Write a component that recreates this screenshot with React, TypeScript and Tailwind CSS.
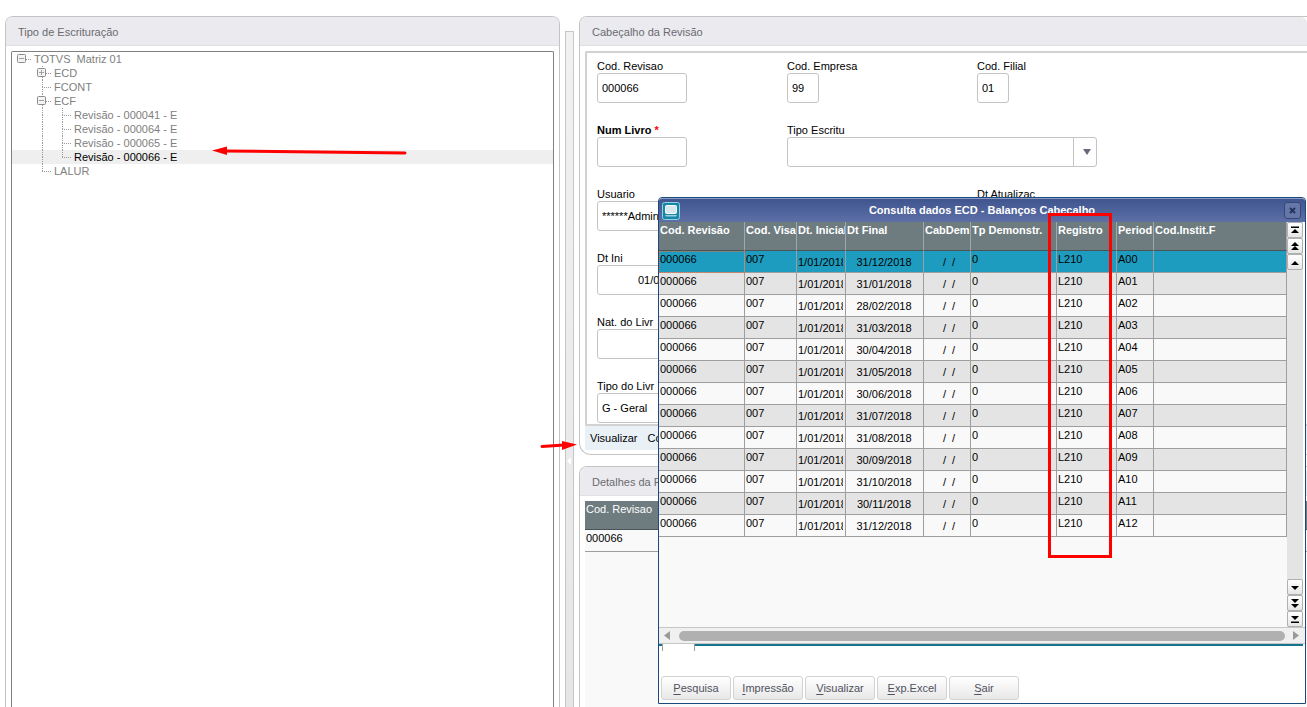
import type { ReactNode } from "react"

type Guide = "none" | "line" | "tee" | "end" | "plus" | "minus" | "root"

interface TreeNode {
  label: string
  guides: Guide[]
  selected?: boolean
}

interface Entry {
  start: string
  end: string
  period: string
}

const tree: TreeNode[] = [
  { label: "TOTVS  Matriz 01", guides: ["root"] },
  { label: "ECD", guides: ["none", "plus"] },
  { label: "FCONT", guides: ["none", "tee"] },
  { label: "ECF", guides: ["none", "minus"] },
  { label: "Revisão - 000041 - E", guides: ["none", "line", "tee"] },
  { label: "Revisão - 000064 - E", guides: ["none", "line", "tee"] },
  { label: "Revisão - 000065 - E", guides: ["none", "line", "tee"] },
  { label: "Revisão - 000066 - E", guides: ["none", "line", "end"], selected: true },
  { label: "LALUR", guides: ["none", "end"] },
]

const entries: Entry[] = [
  "31/12/2018",
  "31/01/2018",
  "28/02/2018",
  "31/03/2018",
  "30/04/2018",
  "31/05/2018",
  "30/06/2018",
  "31/07/2018",
  "31/08/2018",
  "30/09/2018",
  "31/10/2018",
  "30/11/2018",
  "31/12/2018",
].map((end, i) => ({
  start: "1/01/2018",
  end,
  period: `A${String(i).padStart(2, "0")}`,
}))

const columns = [
  { title: "Cod. Revisão", width: "w-[86px]" },
  { title: "Cod. Visa", width: "w-[52px]" },
  { title: "Dt. Inicial", width: "w-[49px]" },
  { title: "Dt Final", width: "w-[78px]" },
  { title: "CabDem", width: "w-[47px]" },
  { title: "Tp Demonstr.", width: "w-[86px]" },
  { title: "Registro", width: "w-[60px]" },
  { title: "Period", width: "w-[37px]" },
  { title: "Cod.Instit.F", width: "w-auto" },
]

const actions = ["Pesquisa", "Impressão", "Visualizar", "Exp.Excel", "Sair"]

function TreeGuide({ kind }: { kind: Guide }) {
  const box = kind === "plus" || kind === "minus" || kind === "root"
  const up = kind !== "none" && kind !== "root"
  const down = kind === "line" || kind === "tee" || kind === "plus" || kind === "minus"
  const across = kind !== "none" && kind !== "line"
  return (
    <svg width="20" height="14" viewBox="0 0 20 14" className="shrink-0" fill="none" aria-hidden="true">
      <g stroke="#9a9a9a" strokeDasharray="1 1">
        {up && <path d="M8.5 0V7" />}
        {down && <path d="M8.5 7V14" />}
        {across && <path d="M8 7.5H17" />}
      </g>
      {box && <rect x="3.5" y="2.5" width="8" height="8" rx="1" fill="#f4f4f4" stroke="#8c8c8c" />}
      {box && <path d="M5 6.5H10" stroke="#a0a0a0" />}
      {kind === "plus" && <path d="M7.5 4V9" stroke="#a0a0a0" />}
    </svg>
  )
}

function Panel({ title, className, children }: { title: string; className: string; children: ReactNode }) {
  return (
    <section className={`flex flex-col border border-[#c4c4c4] bg-white ${className}`}>
      <h2 className="h-[29px] shrink-0 rounded-t-md border-b border-[#e0e0e4] bg-[#ebeaef] px-3 pt-2 leading-[14px] text-[#6a6a70]">
        {title}
      </h2>
      {children}
    </section>
  )
}

function Field({
  id,
  label,
  value = "",
  width = "w-[90px]",
  pad = "pl-1",
  required = false,
}: {
  id: string
  label: string
  value?: string
  width?: string
  pad?: string
  required?: boolean
}) {
  return (
    <div className="h-16">
      <label htmlFor={id} className={`block leading-[14px] ${required ? "font-bold" : ""}`}>
        {label}
        {required && <span className="text-[#f00]"> *</span>}
      </label>
      <input
        id={id}
        defaultValue={value}
        className={`block h-[30px] rounded-[3px] border border-[#c4c4c4] bg-white outline-none ${width} ${pad}`}
      />
    </div>
  )
}

function SelectField({ id, label, value = "", width }: { id: string; label: string; value?: string; width: string }) {
  return (
    <div className="h-16">
      <label htmlFor={id} className="block leading-[14px]">
        {label}
      </label>
      <div className={`relative h-[30px] ${width}`}>
        <select
          id={id}
          defaultValue={value}
          className="block h-full w-full appearance-none rounded-[3px] border border-[#c4c4c4] bg-white pl-1 outline-none"
        >
          <option value={value}>{value}</option>
        </select>
        <span className="pointer-events-none absolute inset-y-px right-px flex w-[23px] items-center justify-center border-l border-[#c4c4c4] pl-1">
          <svg width="8" height="6" viewBox="0 0 8 6" aria-hidden="true">
            <path d="M0 0H8L4 6Z" fill="#666b7c" />
          </svg>
        </span>
      </div>
    </div>
  )
}

const scrollIcons = {
  first: "M4 3.5H12V5H4ZM8 6L12 10H4Z",
  pageUp: "M8 3L12 7H4ZM8 7L12 11H4Z",
  up: "M8 6L12 10H4Z",
  down: "M4 6H12L8 10Z",
  pageDown: "M4 3H12L8 7ZM4 8H12L8 12Z",
  last: "M4 4H12L8 8ZM4 9.5H12V11H4Z",
}

function ScrollButton({ icon, label }: { icon: keyof typeof scrollIcons; label: string }) {
  return (
    <button
      type="button"
      aria-label={label}
      className="flex h-4 w-4 items-center justify-center rounded-[2px] border border-[#b0b0b0] bg-linear-to-b from-white to-[#e6e6e6]"
    >
      <svg width="14" height="14" viewBox="1 0 14 14" className="shrink-0" aria-hidden="true">
        <path d={scrollIcons[icon]} fill="#000" />
      </svg>
    </button>
  )
}

function EntriesTable() {
  return (
    <table className="w-full table-fixed border-separate border-spacing-0 whitespace-nowrap">
      <colgroup>
        {columns.map((c) => (
          <col key={c.title} className={c.width} />
        ))}
      </colgroup>
      <thead>
        <tr className="h-[29px] bg-[#6e7c80] text-left text-white">
          {columns.map((c) => (
            <th
              key={c.title}
              className="overflow-hidden border-r border-b border-r-[#a2a8aa] border-b-[#4a5355] p-0 pt-px pl-px align-top leading-[14px] font-bold"
            >
              {c.title}
            </th>
          ))}
        </tr>
      </thead>
      <tbody>
        {entries.map((e, i) => {
          const bg = i === 0 ? "bg-[#1d9cbf]" : i % 2 ? "bg-[#e4e4e4]" : "bg-[#f9f9f9]"
          const cell = "overflow-hidden border-r border-b border-[#9e9e9e] p-0 pt-px pl-px align-top leading-[14px]"
          const date = "overflow-hidden border-r border-b border-[#9e9e9e] p-0 pt-1 align-top leading-[14px]"
          return (
            <tr key={e.period} className={`h-[22px] ${bg}`}>
              <td className={i === 0 ? `${cell} outline-1 -outline-offset-1 outline-dotted outline-[#e07040]` : cell}>
                000066
              </td>
              <td className={cell}>007</td>
              <td className={date}>
                <span className="mr-0.5 ml-px block overflow-hidden">{e.start}</span>
              </td>
              <td className={`${date} pr-px text-center`}>{e.end}</td>
              <td className={`${date} pl-1 text-center whitespace-pre`}>{"/  /"}</td>
              <td className={cell}>0</td>
              <td className={cell}>L210</td>
              <td className={cell}>{e.period}</td>
              <td className={cell} />
            </tr>
          )
        })}
      </tbody>
    </table>
  )
}

function QueryWindow() {
  return (
    <div
      role="dialog"
      aria-labelledby="query-title"
      className="absolute top-[197px] right-px left-[658px] flex h-[507px] flex-col rounded-t border border-[#1c4a7c] bg-white"
    >
      <header className="flex h-6 shrink-0 items-center rounded-t-[3px] border-t border-[#8d9cc4] bg-linear-to-b from-[#40548f] to-[#5d70a6] pr-1 pl-[3px] text-white">
        <svg width="18" height="18" viewBox="0 0 18 18" aria-hidden="true">
          <rect x="0.5" y="0.5" width="17" height="17" rx="2" fill="#1787a8" stroke="#8fd0e2" />
          <rect x="3.500" y="3.500" width="11" height="8" rx="1" fill="#d5e8ee" stroke="#fff" />
          <path d="M3 13H15L14 14.500H4Z" fill="#9fd0dd" />
        </svg>
        <h1 id="query-title" className="flex-1 text-center font-bold">
          Consulta dados ECD - Balanços Cabecalho
        </h1>
        <button
          type="button"
          aria-label="Fechar"
          className="flex h-[17px] w-[17px] items-center justify-center rounded-[3px] border border-[#374777] bg-[#6576a8]"
        >
          <svg width="7" height="7" viewBox="0 0 7 7" aria-hidden="true">
            <path d="M1 1L6 6M6 1L1 6" stroke="#26345e" strokeWidth="2" />
          </svg>
        </button>
      </header>
      <div className="flex min-h-0 flex-1 pr-0.5">
        <div className="min-w-0 flex-1 bg-[#f9f9f9]">
          <EntriesTable />
        </div>
        <div className="flex w-4 flex-col items-center justify-between bg-[#e4e4e4]">
          <div>
            <ScrollButton icon="first" label="Primeiro" />
            <ScrollButton icon="pageUp" label="Página acima" />
            <ScrollButton icon="up" label="Acima" />
          </div>
          <div>
            <ScrollButton icon="down" label="Abaixo" />
            <ScrollButton icon="pageDown" label="Página abaixo" />
            <ScrollButton icon="last" label="Último" />
          </div>
        </div>
      </div>
      <div className="flex h-[17px] shrink-0 items-center gap-2 border-y border-[#c6c6c6] bg-[#f0f0f0] px-[5px]">
        <svg width="7" height="9" viewBox="0 0 7 9" aria-hidden="true">
          <path d="M6 0V9L0 4.5Z" fill="#9a9a9a" />
        </svg>
        <span className="h-[10px] flex-1 rounded-full bg-[#b0b0b0]" />
        <svg width="7" height="9" viewBox="0 0 7 9" aria-hidden="true">
          <path d="M0 0V9L6 4.5Z" fill="#9a9a9a" />
        </svg>
      </div>
      <div className="flex h-8 shrink-0 pr-0.5">
        <span className="h-0.5 w-[3px] bg-[#15758d]" />
        <span className="h-[7px] w-[33px] border-x border-[#9e9e9e]" />
        <span className="h-0.5 flex-1 bg-[#15758d]" />
      </div>
      <footer className="flex shrink-0 gap-0.5 px-0.5 pb-[3px]">
        {actions.map((a) => (
          <button
            key={a}
            type="button"
            className="h-6 w-[70px] rounded-[3px] border border-[#d2d2d2] bg-linear-to-b from-white to-[#e8e8e8] text-[#50525e]"
          >
            <span className="underline underline-offset-2">{a[0]}</span>
            {a.slice(1)}
          </button>
        ))}
      </footer>
    </div>
  )
}

// Hand-drawn marks lying over the screen
function Marks() {
  return (
    <>
      <svg className="pointer-events-none absolute top-[144px] left-[211px]" width="196" height="14" viewBox="0 0 196 14" aria-hidden="true">
        <path d="M14 7L194 9" stroke="#f00" strokeWidth="3" strokeLinecap="round" />
        <path d="M1 6.5L16 2.5V11Z" fill="#f00" />
      </svg>
      <svg className="pointer-events-none absolute top-[438px] left-[540px]" width="38" height="14" viewBox="0 0 38 14" aria-hidden="true">
        <path d="M2 8.5L24 7" stroke="#f00" strokeWidth="3" strokeLinecap="round" />
        <path d="M37 6.5L22 3V12Z" fill="#f00" />
      </svg>
      <span className="pointer-events-none absolute top-[213px] left-[1048px] h-[345px] w-16 border-3 border-[#f00]" />
    </>
  )
}

export default function App() {
  return (
    <main className="relative flex h-screen overflow-hidden bg-white pt-4 pl-[5px] font-['Liberation_Sans',Arial,sans-serif] text-[11px] text-black">
      <Panel title="Tipo de Escrituração" className="w-[555px] shrink-0 rounded-t-lg border-b-0">
        <ul className="mx-[5px] mt-[5px] flex-1 rounded-t-[2px] border border-b-0 border-[#808080] text-[#808080]">
          {tree.map((node) => (
            <li
              key={node.label}
              className={`flex h-[14px] items-center pl-0.5 ${node.selected ? "bg-[#efefef] text-black" : ""}`}
            >
              {node.guides.map((g, i) => (
                <TreeGuide key={i} kind={g} />
              ))}
              <span className="leading-[14px] whitespace-pre">{node.label}</span>
            </li>
          ))}
        </ul>
      </Panel>

      <div className="mx-[5px] mt-[15px] flex w-[9px] shrink-0 items-center border border-b-0 border-[#c6c6c6] bg-linear-to-b from-[#f1f1f1] to-[#e6e6e6]">
        <svg width="5" height="8" viewBox="0 0 5 8" className="mt-[183px]" aria-hidden="true">
          <path d="M5 0V8L1 4Z" fill="#fff" />
        </svg>
      </div>

      <div className="flex min-w-0 flex-1 flex-col">
        <Panel title="Cabeçalho da Revisão" className="shrink-0 rounded-tl-lg rounded-bl-xl border-r-0 pb-1">
          <form className="mt-[5px] ml-[5px] h-[375px] overflow-hidden rounded-l-[2px] border-2 border-r-0 border-[#d2d2d2] px-[10px] pt-[6px]">
            <div className="grid grid-cols-[190px_190px_1fr]">
              <Field id="rev" label="Cod. Revisao" value="000066" />
              <Field id="emp" label="Cod. Empresa" value="99" width="w-8" />
              <Field id="fil" label="Cod. Filial" value="01" width="w-8" />
              <Field id="num" label="Num Livro" required />
              <div className="col-span-2">
                <SelectField id="esc" label="Tipo Escritu" width="w-[310px]" />
              </div>
              <div className="col-span-2">
                <Field id="usr" label="Usuario" value="******Administrador" width="w-[310px]" />
              </div>
              <Field id="atu" label="Dt Atualizac" />
              <div className="col-span-3">
                <Field id="ini" label="Dt Ini" value="01/01/2018" width="w-[120px]" pad="pl-10" />
              </div>
              <div className="col-span-3">
                <Field id="nat" label="Nat. do Livr" width="w-[120px]" />
              </div>
              <div className="col-span-3">
                <SelectField id="tip" label="Tipo do Livr" value="G - Geral" width="w-[180px]" />
              </div>
            </div>
          </form>
          <nav className="ml-[5px] flex h-[24px] gap-[10px] bg-[#e9f0f6] pl-[5px]">
            <button type="button">Visualizar</button>
            <button type="button">Consultar</button>
          </nav>
        </Panel>

        <Panel title="Detalhes da Revisão" className="mt-[11px] flex-1 rounded-tl-lg border-r-0 border-b-0">
          <div className="mt-[5px] ml-[5px] flex-1 bg-[#f9f9f9]">
            <table className="w-full border-separate border-spacing-0 text-left">
              <thead>
                <tr className="h-[29px] bg-[#6e7c80] text-white">
                  <th className="border-b border-[#4a5355] p-0 pt-px pl-px align-top leading-[14px] font-normal">Cod. Revisao</th>
                </tr>
              </thead>
              <tbody>
                <tr className="h-[22px]">
                  <td className="border-b border-[#9e9e9e] p-0 pt-px pl-px align-top leading-[14px]">000066</td>
                </tr>
              </tbody>
            </table>
          </div>
        </Panel>
      </div>

      <QueryWindow />
      <Marks />
    </main>
  )
}
